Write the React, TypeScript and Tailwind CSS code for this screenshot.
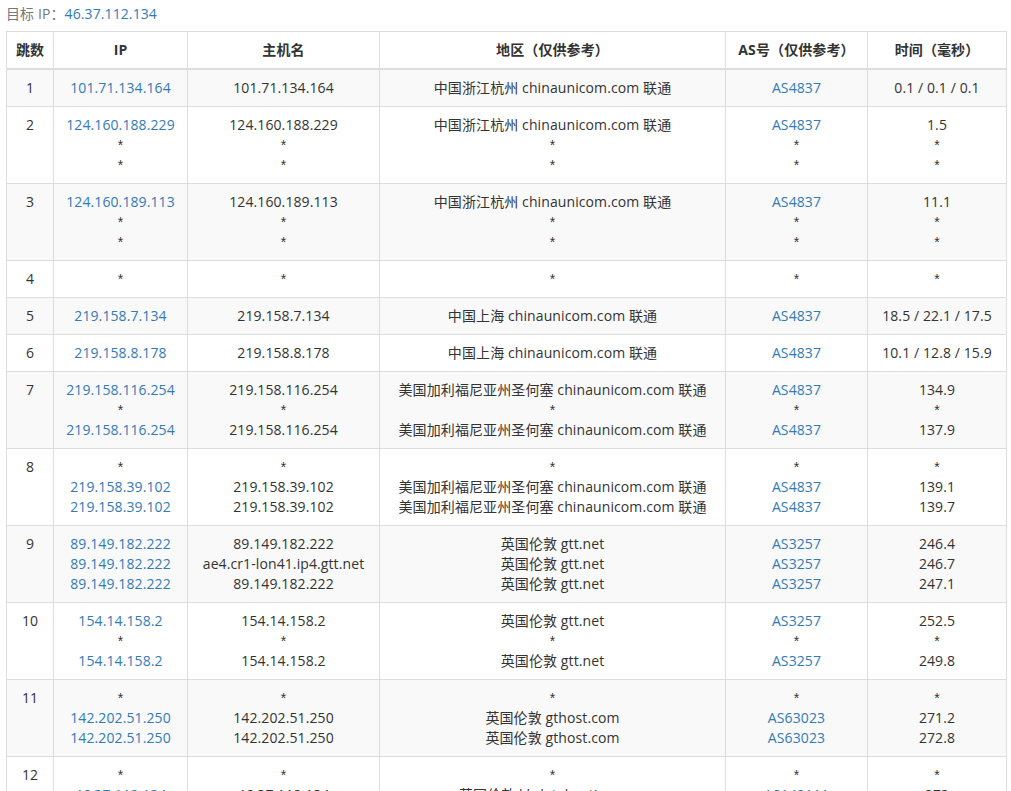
const rows: string[][][] = [
  [['101.71.134.164'], ['101.71.134.164'], ['中国浙江杭州 chinaunicom.com 联通'], ['AS4837'], ['0.1 / 0.1 / 0.1']],
  [['124.160.188.229', '*', '*'], ['124.160.188.229', '*', '*'], ['中国浙江杭州 chinaunicom.com 联通', '*', '*'], ['AS4837', '*', '*'], ['1.5', '*', '*']],
  [['124.160.189.113', '*', '*'], ['124.160.189.113', '*', '*'], ['中国浙江杭州 chinaunicom.com 联通', '*', '*'], ['AS4837', '*', '*'], ['11.1', '*', '*']],
  [['*'], ['*'], ['*'], ['*'], ['*']],
  [['219.158.7.134'], ['219.158.7.134'], ['中国上海 chinaunicom.com 联通'], ['AS4837'], ['18.5 / 22.1 / 17.5']],
  [['219.158.8.178'], ['219.158.8.178'], ['中国上海 chinaunicom.com 联通'], ['AS4837'], ['10.1 / 12.8 / 15.9']],
  [['219.158.116.254', '*', '219.158.116.254'], ['219.158.116.254', '*', '219.158.116.254'], ['美国加利福尼亚州圣何塞 chinaunicom.com 联通', '*', '美国加利福尼亚州圣何塞 chinaunicom.com 联通'], ['AS4837', '*', 'AS4837'], ['134.9', '*', '137.9']],
  [['*', '219.158.39.102', '219.158.39.102'], ['*', '219.158.39.102', '219.158.39.102'], ['*', '美国加利福尼亚州圣何塞 chinaunicom.com 联通', '美国加利福尼亚州圣何塞 chinaunicom.com 联通'], ['*', 'AS4837', 'AS4837'], ['*', '139.1', '139.7']],
  [['89.149.182.222', '89.149.182.222', '89.149.182.222'], ['89.149.182.222', 'ae4.cr1-lon41.ip4.gtt.net', '89.149.182.222'], ['英国伦敦 gtt.net', '英国伦敦 gtt.net', '英国伦敦 gtt.net'], ['AS3257', 'AS3257', 'AS3257'], ['246.4', '246.7', '247.1']],
  [['154.14.158.2', '*', '154.14.158.2'], ['154.14.158.2', '*', '154.14.158.2'], ['英国伦敦 gtt.net', '*', '英国伦敦 gtt.net'], ['AS3257', '*', 'AS3257'], ['252.5', '*', '249.8']],
  [['*', '142.202.51.250', '142.202.51.250'], ['*', '142.202.51.250', '142.202.51.250'], ['*', '英国伦敦 gthost.com', '英国伦敦 gthost.com'], ['*', 'AS63023', 'AS63023'], ['*', '271.2', '272.8']],
  [['*', '46.37.112.134', '46.37.112.134'], ['*', '46.37.112.134', '46.37.112.134'], ['*', '英国伦敦 khdatahosting.com', '英国伦敦 khdatahosting.com'], ['*', 'AS142111', 'AS142111'], ['*', '273', '273']],
]

const heads = ['跳数', 'IP', '主机名', '地区（仅供参考）', 'AS号（仅供参考）', '时间（毫秒）']

function Cell({ lines, link }: { lines: string[]; link?: boolean }) {
  return (
    <td className="border border-[#ddd] p-2 align-top">
      {lines.map((line, i) =>
        line === '*' ? (
          <div key={i} className="font-['Liberation_Sans',sans-serif]">*</div>
        ) : (
          <div key={i} className={link ? 'text-[#337ab7]' : ''}>{line}</div>
        )
      )}
    </td>
  )
}

export default function App() {
  return (
    <div className="h-[791px] overflow-hidden bg-white pl-[6px] pr-[5px] text-[14px] leading-5 tracking-[0.1px] text-[#333] font-['Open_Sans','Noto_Sans_CJK_SC',sans-serif]">
      <div className="flex h-[31px] items-start pt-[4px] text-[#777]">
        <span>目标 IP：</span>
        <span className="text-[#337ab7]">46.37.112.134</span>
      </div>
      <table className="w-[1000px] table-fixed border-collapse text-center">
        <colgroup>
          <col className="w-[47px]" />
          <col className="w-[134px]" />
          <col className="w-[192px]" />
          <col className="w-[346px]" />
          <col className="w-[142px]" />
          <col className="w-[139px]" />
        </colgroup>
        <thead>
          <tr>
            {heads.map((h) => (
              <th key={h} className="border border-b-2 border-[#ddd] p-2 align-bottom font-bold">
                {h}
              </th>
            ))}
          </tr>
        </thead>
        <tbody>
          {rows.map((row, i) => (
            <tr key={i} className={i % 2 === 0 ? 'bg-[#f9f9f9]' : ''}>
              <Cell lines={[String(i + 1)]} />
              {row.map((lines, j) => (
                <Cell key={j} lines={lines} link={j === 0 || j === 3} />
              ))}
            </tr>
          ))}
        </tbody>
      </table>
    </div>
  )
}
